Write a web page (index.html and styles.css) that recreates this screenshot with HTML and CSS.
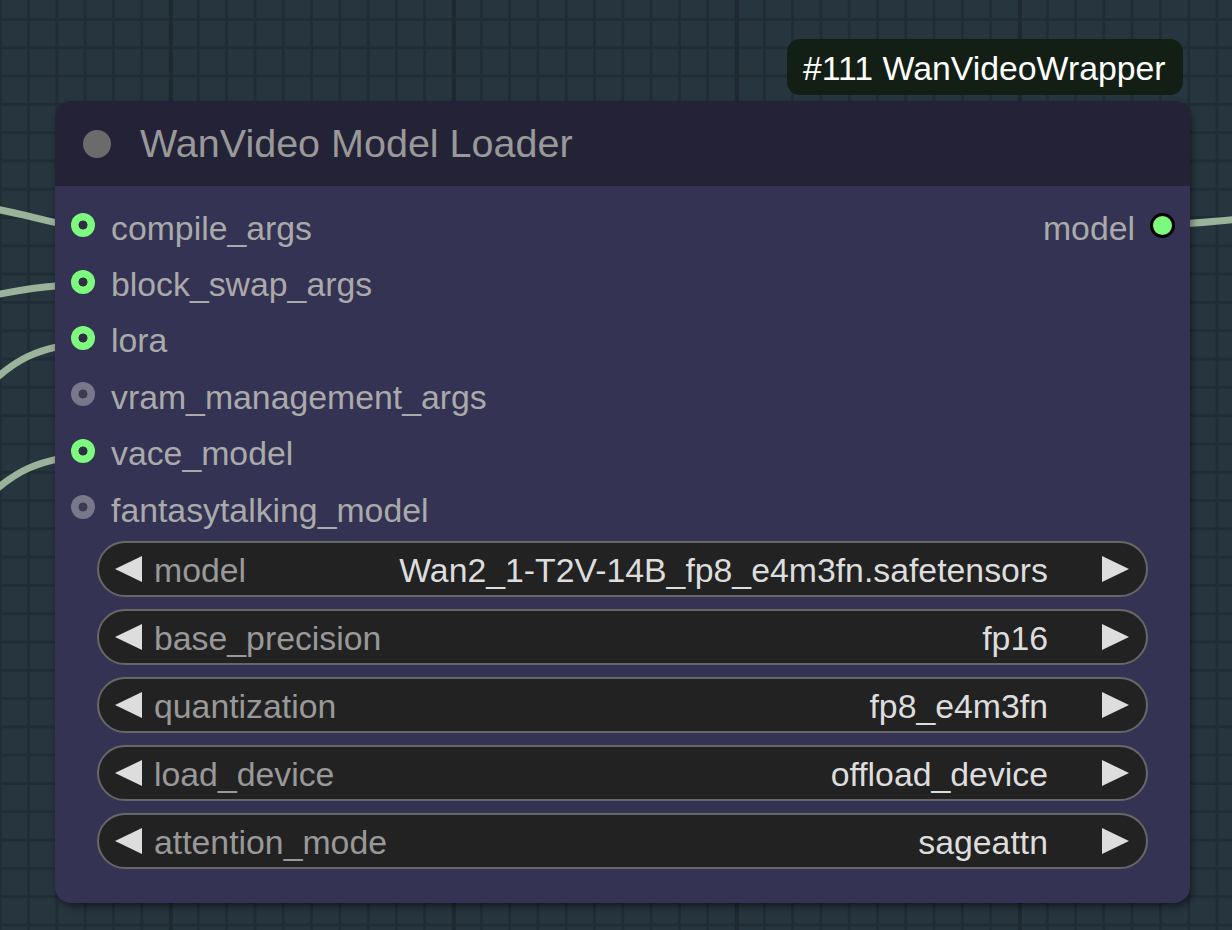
FILE: index.html
```html
<!DOCTYPE html>
<html>
<head>
<meta charset="utf-8">
<title>WanVideo Model Loader</title>
<link rel="stylesheet" href="styles.css">
</head>
<body>
<div class="canvas">
  <svg class="wires" width="1232" height="930" viewBox="0 0 1232 930">
    <path d="M -10 208 C 20 213, 40 220, 90 230"/>
    <path d="M -10 296 C 20 290, 40 286, 90 284"/>
    <path d="M -10 384 C 15 360, 35 348, 90 341"/>
    <path d="M -10 495 C 15 472, 35 460, 90 454"/>
    <path d="M 1150 225 C 1195 224, 1215 221, 1240 219"/>
  </svg>

  <div class="badge">#111 WanVideoWrapper</div>

  <div class="node">
    <div class="node-header">
      <span class="node-dot"></span>
      <span class="node-title">WanVideo Model Loader</span>
    </div>
    <div class="node-body">
      <div class="slots">
        <div class="inputs">
          <div class="slot"><span class="slot-dot on"></span><span class="slot-label">compile_args</span></div>
          <div class="slot"><span class="slot-dot on"></span><span class="slot-label">block_swap_args</span></div>
          <div class="slot"><span class="slot-dot on"></span><span class="slot-label">lora</span></div>
          <div class="slot"><span class="slot-dot off"></span><span class="slot-label">vram_management_args</span></div>
          <div class="slot"><span class="slot-dot on"></span><span class="slot-label">vace_model</span></div>
          <div class="slot"><span class="slot-dot off"></span><span class="slot-label">fantasytalking_model</span></div>
        </div>
        <div class="outputs">
          <div class="slot"><span class="slot-label">model</span><span class="out-dot"></span></div>
        </div>
      </div>
      <div class="widgets">
        <div class="combo">
          <svg class="arrow" viewBox="0 0 27 26"><polygon points="0,13 27,0 27,26"/></svg>
          <span class="w-label">model</span>
          <span class="w-value">Wan2_1-T2V-14B_fp8_e4m3fn.safetensors</span>
          <svg class="arrow" viewBox="0 0 27 26"><polygon points="27,13 0,0 0,26"/></svg>
        </div>
        <div class="combo">
          <svg class="arrow" viewBox="0 0 27 26"><polygon points="0,13 27,0 27,26"/></svg>
          <span class="w-label">base_precision</span>
          <span class="w-value">fp16</span>
          <svg class="arrow" viewBox="0 0 27 26"><polygon points="27,13 0,0 0,26"/></svg>
        </div>
        <div class="combo">
          <svg class="arrow" viewBox="0 0 27 26"><polygon points="0,13 27,0 27,26"/></svg>
          <span class="w-label">quantization</span>
          <span class="w-value">fp8_e4m3fn</span>
          <svg class="arrow" viewBox="0 0 27 26"><polygon points="27,13 0,0 0,26"/></svg>
        </div>
        <div class="combo">
          <svg class="arrow" viewBox="0 0 27 26"><polygon points="0,13 27,0 27,26"/></svg>
          <span class="w-label">load_device</span>
          <span class="w-value">offload_device</span>
          <svg class="arrow" viewBox="0 0 27 26"><polygon points="27,13 0,0 0,26"/></svg>
        </div>
        <div class="combo">
          <svg class="arrow" viewBox="0 0 27 26"><polygon points="0,13 27,0 27,26"/></svg>
          <span class="w-label">attention_mode</span>
          <span class="w-value">sageattn</span>
          <svg class="arrow" viewBox="0 0 27 26"><polygon points="27,13 0,0 0,26"/></svg>
        </div>
      </div>
    </div>
  </div>
</div>
</body>
</html>
```

FILE: styles.css
```css
* { box-sizing: border-box; }

html, body {
  margin: 0;
  padding: 0;
  background: #27353e;
  font-family: "Liberation Sans", Arial, Helvetica, sans-serif;
}

.canvas {
  position: relative;
  width: 1232px;
  height: 930px;
  overflow: hidden;
  background-color: #27353e;
  background-image:
    linear-gradient(90deg, #1e2930 0 4px, transparent 4px),
    linear-gradient(90deg, #212d35 0 2.5px, transparent 2.5px),
    linear-gradient(180deg, #212d35 0 2.5px, transparent 2.5px);
  background-size: 283px 100%, 28.3px 100%, 100% 28.3px;
  background-position: 169px 0, 27.1px 0, 0 18px;
}

.wires {
  position: absolute;
  left: 0;
  top: 0;
  z-index: 0;
}

.wires path {
  fill: none;
  stroke: #9bb29b;
  stroke-width: 7;
}

.badge {
  position: absolute;
  left: 787px;
  top: 39px;
  height: 56px;
  padding: 2px 17px 0 16px;
  display: flex;
  align-items: center;
  background: #131f14;
  border-radius: 13px;
  color: #ffffff;
  font-size: 33.8px;
  white-space: nowrap;
  z-index: 2;
}

.node {
  position: absolute;
  left: 55px;
  top: 101px;
  width: 1135px;
  height: 802px;
  border-radius: 16px;
  background: #353353;
  overflow: hidden;
  box-shadow: 2px 4px 7px rgba(0, 0, 0, 0.45);
  z-index: 1;
}

.node-header {
  height: 85px;
  background: #242236;
  display: flex;
  align-items: center;
  padding-left: 28px;
}

.node-dot {
  width: 28px;
  height: 28px;
  border-radius: 50%;
  background: #6b6b6b;
  margin-right: 29px;
  flex: none;
}

.node-title {
  font-size: 39.5px;
  color: #999999;
  white-space: nowrap;
}

.node-body {
  padding-top: 11px;
}

.slots {
  display: flex;
  justify-content: space-between;
}

.slot {
  height: 56.4px;
  display: flex;
  align-items: center;
  white-space: nowrap;
}

.inputs .slot {
  padding-left: 16px;
}

.outputs .slot {
  padding-right: 15px;
}

.slot-dot {
  width: 24px;
  height: 24px;
  border-radius: 50%;
  margin-right: 16px;
  flex: none;
}

.slot-dot.on {
  background: radial-gradient(circle, #2e2d44 0 4.2px, #7dfa7d 4.8px);
}

.slot-dot.off {
  background: radial-gradient(circle, #3b3a52 0 4.2px, #78778c 4.8px);
}

.slot-label {
  font-size: 33.8px;
  color: #aaaaaa;
  padding-top: 6px;
}

.out-dot {
  width: 25px;
  height: 25px;
  border-radius: 50%;
  background: #7dfa7d;
  border: 3px solid #000000;
  margin-left: 15px;
  flex: none;
}

.widgets {
  display: flex;
  flex-direction: column;
  gap: 11.5px;
  padding: 0 42px;
  margin-top: 5.5px;
}

.combo {
  height: 56.5px;
  border: 2px solid #676767;
  border-radius: 29px;
  background: #222222;
  display: flex;
  align-items: center;
  padding: 0 17px 0 16px;
  white-space: nowrap;
}

.arrow {
  width: 27px;
  height: 26px;
  fill: #dddddd;
  flex: none;
}

.w-label {
  margin-left: 12px;
  flex: 1;
  font-size: 33.8px;
  color: #999999;
  padding-top: 3px;
}

.w-value {
  margin-right: 54px;
  font-size: 33.8px;
  color: #dddddd;
  padding-top: 3px;
}
```
